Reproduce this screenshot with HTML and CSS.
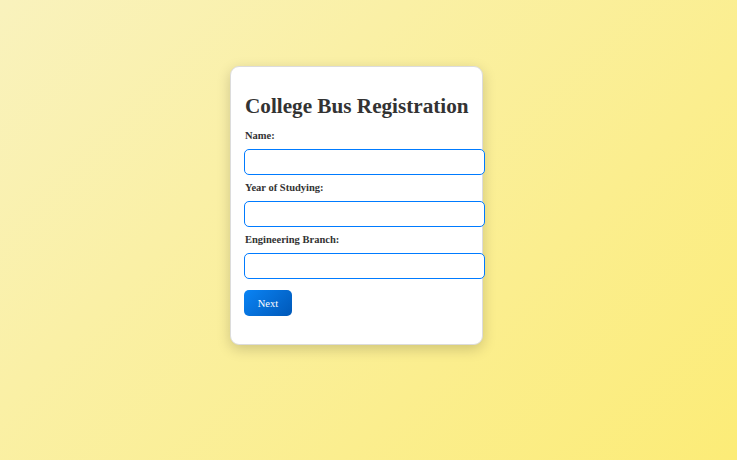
FILE: index.html
```html
<!DOCTYPE html>
<html lang="en">
<head>
<meta charset="utf-8">
<title>College Bus Registration</title>
<link rel="stylesheet" href="styles.css">
</head>
<body>
<main class="page">
  <form class="card">
    <h2 class="title">College Bus Registration</h2>
    <div class="field">
      <label class="label" for="name">Name:</label>
      <input class="input" id="name" type="text">
    </div>
    <div class="field">
      <label class="label" for="year">Year of Studying:</label>
      <input class="input" id="year" type="text">
    </div>
    <div class="field">
      <label class="label" for="branch">Engineering Branch:</label>
      <input class="input" id="branch" type="text">
    </div>
    <button class="btn" type="button">Next</button>
  </form>
</main>
</body>
</html>
```
FILE: styles.css
```css
html, body {
  margin: 0;
  height: 100%;
}
body {
  background: linear-gradient(135deg, #f9f2bd 0%, #fcec77 100%);
  font-family: "Liberation Serif", "Times New Roman", serif;
  color: #333;
}
.page {
  padding: 66px 0 0 230px;
}
.card {
  box-sizing: border-box;
  width: 253px;
  height: 279px;
  background: #fff;
  border: 1px solid #dcdcdc;
  border-radius: 9px;
  box-shadow: 0 4px 14px rgba(0, 0, 0, 0.18);
  padding: 27px 0 0 13px;
  display: flex;
  flex-direction: column;
  align-items: flex-start;
}
.title {
  margin: 0 0 12px 1px;
  font-size: 21.2px;
  line-height: 24px;
  font-weight: bold;
  color: #333;
  white-space: nowrap;
}
.field {
  display: flex;
  flex-direction: column;
  align-items: flex-start;
  margin-bottom: 7px;
}
.label {
  font-size: 10.5px;
  line-height: 12px;
  font-weight: bold;
  color: #333;
  margin-bottom: 7px;
  margin-left: 1px;
}
.input {
  box-sizing: border-box;
  width: 241px;
  height: 26px;
  border: 1px solid #007bff;
  border-radius: 5px;
  background: #fff;
  margin: 0;
  padding: 0 8px;
  outline: none;
}
.btn {
  margin-top: 4px;
  width: 48px;
  height: 26px;
  border: none;
  border-radius: 5px;
  background: linear-gradient(135deg, #0a84f5 0%, #0058b8 100%);
  color: #fff;
  font-family: "Liberation Serif", "Times New Roman", serif;
  font-size: 10.5px;
  padding: 0;
  cursor: pointer;
}
```
